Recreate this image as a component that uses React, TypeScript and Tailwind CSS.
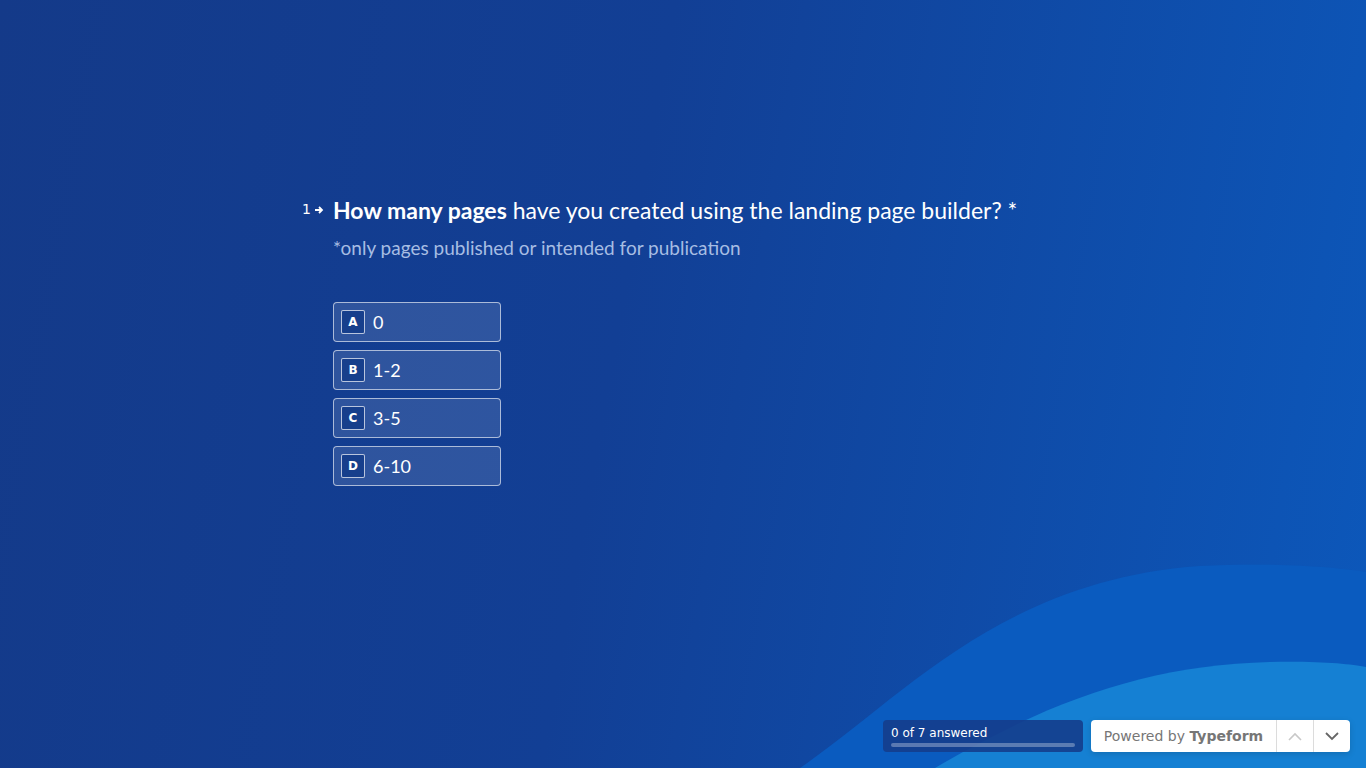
import React from "react";

const options = [
  { key: "A", label: "0" },
  { key: "B", label: "1-2" },
  { key: "C", label: "3-5" },
  { key: "D", label: "6-10" },
];

export default function App() {
  return (
    <div className="relative w-[1366px] h-[768px] overflow-hidden bg-[linear-gradient(100deg,#143a89_0%,#123f95_45%,#0c58bb_100%)]">
      <svg className="absolute inset-0" width="1366" height="768" viewBox="0 0 1366 768">
        <path d="M800 768 C 900 700, 1000 580, 1200 566 C 1280 562, 1340 568, 1366 572 L1366 768 Z" fill="#0a5bbf" />
        <path d="M935 768 C 1050 700, 1150 665, 1270 662 C 1320 661, 1350 664, 1366 667 L1366 768 Z" fill="#1580d3" />
      </svg>

      <div className="relative pt-[196px] pl-[302px] font-['Lato','Noto_Sans',sans-serif]">
        <div className="flex items-start">
          <div className="w-[31px] flex items-center gap-[3px] pt-[6px] text-white font-['DejaVu_Sans',sans-serif] text-[14px] leading-none">
            <span>1</span>
            <svg width="10" height="10" viewBox="0 0 10 10" className="mt-[1px]">
              <path d="M1 5 H8 M5 2 L8 5 L5 8" stroke="white" strokeWidth="1.8" fill="none" />
            </svg>
          </div>
          <div>
            <h1 className="text-white text-[23px] leading-[28px]">
              <span className="font-bold">How many pages</span> have you created using the landing page builder? *
            </h1>
            <p className="mt-[12px] text-[#a7bde3] text-[19px] leading-[24px]">
              *only pages published or intended for publication
            </p>
            <div className="mt-[42px] flex flex-col gap-[8px]">
              {options.map((o) => (
                <div
                  key={o.key}
                  className="w-[168px] h-[40px] flex items-center gap-[8px] pl-[7px] rounded-[4px] border border-white/60 bg-white/[0.12]"
                >
                  <div className="w-[24px] h-[24px] flex items-center justify-center rounded-[2px] border border-white/70 bg-[#173f8c] text-white font-['DejaVu_Sans',sans-serif] font-bold text-[12px]">
                    {o.key}
                  </div>
                  <span className="text-white text-[18px]">{o.label}</span>
                </div>
              ))}
            </div>
          </div>
        </div>
      </div>

      <div className="absolute bottom-[16px] right-[16px] flex items-center gap-[8px] font-['DejaVu_Sans',sans-serif]">
        <div className="w-[200px] h-[32px] rounded-[4px] bg-[#143d8c]/90 px-[8px] pt-[6px]">
          <div className="text-white text-[12px] leading-[14px]">0 of 7 answered</div>
          <div className="mt-[3px] h-[4px] rounded-full bg-white/30" />
        </div>
        <div className="h-[32px] flex items-stretch rounded-[4px] bg-white shadow-[0_2px_6px_rgba(0,0,0,0.15)]">
          <div className="w-[185px] flex items-center justify-center text-[14px] text-[#767676]">
            Powered by&nbsp;<span className="font-bold">Typeform</span>
          </div>
          <div className="w-[37px] flex items-center justify-center border-l border-[#dcdcdc]">
            <svg width="14" height="9" viewBox="0 0 14 9">
              <path d="M1 8 L7 2 L13 8" stroke="#c8c8c8" strokeWidth="1.6" fill="none" />
            </svg>
          </div>
          <div className="w-[37px] flex items-center justify-center border-l border-[#dcdcdc]">
            <svg width="14" height="9" viewBox="0 0 14 9">
              <path d="M1 1 L7 7 L13 1" stroke="#666" strokeWidth="1.8" fill="none" />
            </svg>
          </div>
        </div>
      </div>
    </div>
  );
}
